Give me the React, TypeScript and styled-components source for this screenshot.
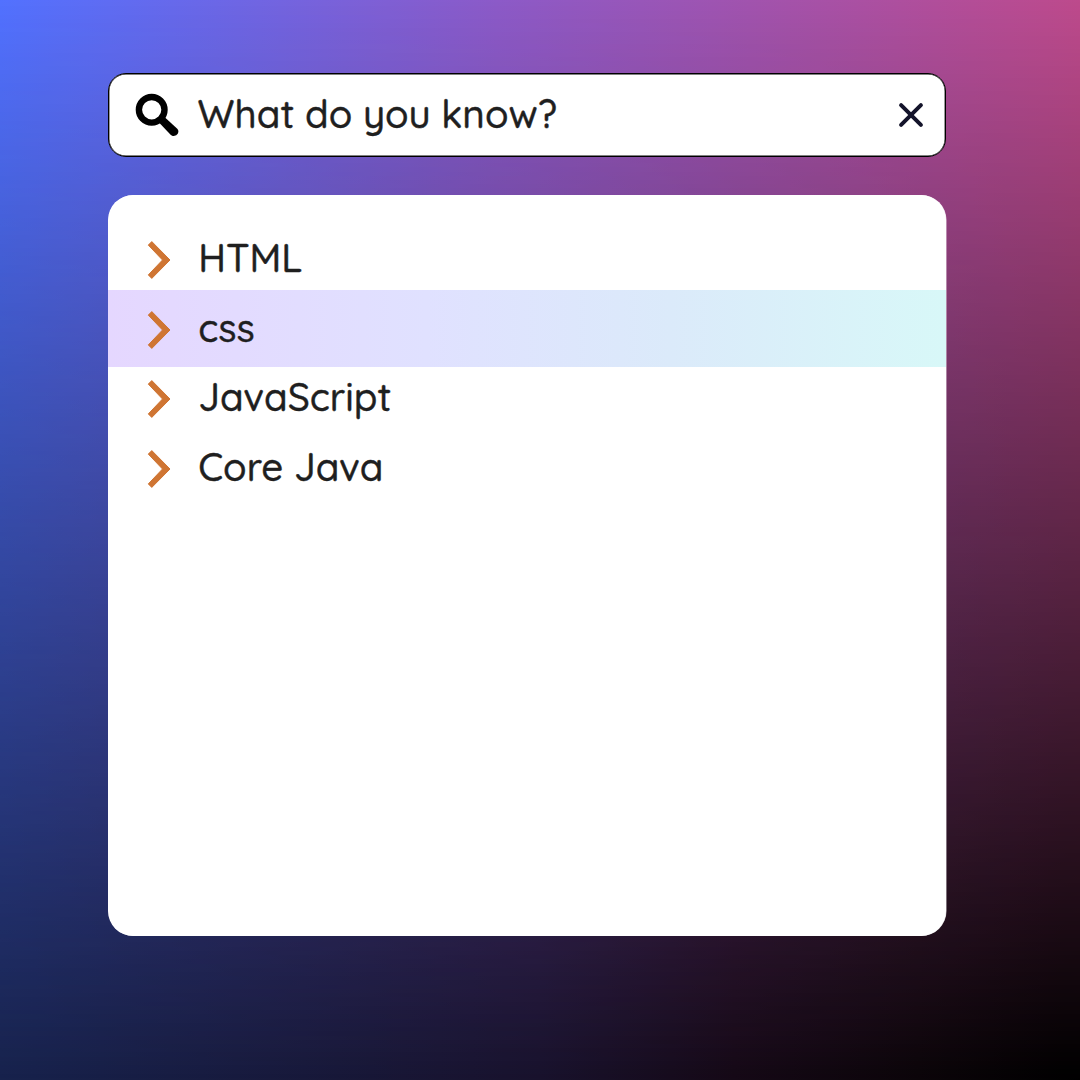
import React from "react";
import styled, { createGlobalStyle, css } from "styled-components";

const GlobalStyle = createGlobalStyle`
  html, body { margin: 0; padding: 0; }
  *, *::before, *::after { box-sizing: border-box; }
`;

const Page = styled.div`
  position: relative;
  isolation: isolate;
  width: 1080px;
  height: 1080px;
  overflow: hidden;
  display: flex;
  flex-direction: column;
  gap: 38px;
  padding: 73px 134px 0 108px;
  font-family: Quicksand, Lato, sans-serif;
  color: #1f1f1f;
  background: linear-gradient(to right, #17224c, #18122c 50%, #150916 68%, #0b0509 85%, #000000);

  &::before {
    content: "";
    position: absolute;
    inset: 0;
    z-index: -1;
    background: linear-gradient(to right, #5271ff, #8c5ac8 46%, #bd4a8c);
    mask-image: linear-gradient(to bottom, #000, transparent);
  }
`;

const SearchBar = styled.div`
  display: flex;
  align-items: center;
  height: 84px;
  padding: 0 21px 0 26px;
  background: #fff;
  border: 1px solid #000;
  border-radius: 18px;
  box-shadow: inset 0 0 0 0.4px #000;
`;

const SearchIcon = styled.svg`
  flex: none;
  width: 44px;
  height: 44px;
  margin-right: 18.6px;
`;

const ClearIcon = styled.svg`
  flex: none;
  width: 26px;
  height: 26px;
  margin-left: auto;
`;

const Label = styled.span`
  font-size: 38.6px;
  font-weight: 500;
  -webkit-text-stroke: 0.4px #1f1f1f;
  line-height: 46px;
  padding-bottom: 1.5px;
  white-space: nowrap;
`;

const Panel = styled.ul`
  list-style: none;
  height: 741px;
  margin: 0;
  padding: 29.4px 0 0;
  background: #fff;
  border-radius: 25px;
  box-shadow: 0.5px 0 0 rgba(255, 255, 255, 0.8);
  overflow: hidden;
`;

const Item = styled.li<{ $selected?: boolean }>`
  display: flex;
  align-items: center;
  height: 69.5px;
  padding-left: 39px;
  ${(p) =>
    p.$selected &&
    css`
      height: 77.5px;
      margin: -4px 0;
      background: linear-gradient(to right, #e5d7ff, #e0e1ff 38%, #dbeafa 67%, #d8f8f8);
    `}
`;

const Chevron = styled.svg`
  flex: none;
  width: 24px;
  height: 38px;
  margin: 2px 27.2px 0 0;
`;

const topics = [
  { name: "HTML" },
  { name: "css", selected: true },
  { name: "JavaScript" },
  { name: "Core Java" },
];

export default function App() {
  return (
    <>
      <GlobalStyle />
      <Page>
        <SearchBar>
          <SearchIcon viewBox="0 0 44 44">
            <circle cx="16.7" cy="16.8" r="12.8" fill="none" stroke="#000" strokeWidth="6.4" />
            <path d="M23.5 29 35.6 41.7C39.8 45.7 46.2 39.6 42 35.6L30 24.5Z" fill="#000" />
          </SearchIcon>
          <Label>What do you know?</Label>
          <ClearIcon viewBox="0 0 26 26">
            <path d="M3.1 3.1 22.9 22.9M22.9 3.1 3.1 22.9" stroke="#14142b" strokeWidth="4" strokeLinecap="round" />
          </ClearIcon>
        </SearchBar>
        <Panel>
          {topics.map((t) => (
            <Item key={t.name} $selected={t.selected}>
              <Chevron viewBox="0 0 24 38">
                <path
                  d="M1.3 4.1 4.8 .6 23 19 4.8 37.4 1.3 33.9 15.5 19Z"
                  fill="#cf7533"
                  stroke="#cf7533"
                  strokeWidth="1"
                  strokeLinejoin="round"
                />
              </Chevron>
              <Label>{t.name}</Label>
            </Item>
          ))}
        </Panel>
      </Page>
    </>
  );
}
